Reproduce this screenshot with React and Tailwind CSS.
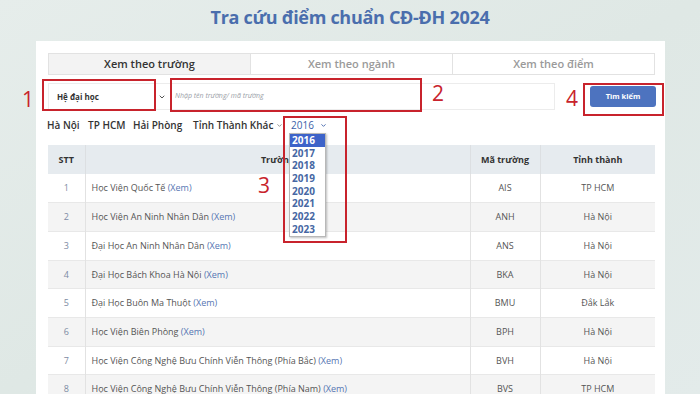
import { ChevronDown } from "lucide-react";

const rows = [
  { stt: 1, name: "Học Viện Quốc Tế", code: "AIS", city: "TP HCM" },
  { stt: 2, name: "Học Viện An Ninh Nhân Dân", code: "ANH", city: "Hà Nội" },
  { stt: 3, name: "Đại Học An Ninh Nhân Dân", code: "ANS", city: "Hà Nội" },
  { stt: 4, name: "Đại Học Bách Khoa Hà Nội", code: "BKA", city: "Hà Nội" },
  { stt: 5, name: "Đại Học Buôn Ma Thuột", code: "BMU", city: "Đắk Lắk" },
  { stt: 6, name: "Học Viện Biên Phòng", code: "BPH", city: "Hà Nội" },
  { stt: 7, name: "Học Viện Công Nghệ Bưu Chính Viễn Thông (Phía Bắc)", code: "BVH", city: "Hà Nội" },
  { stt: 8, name: "Học Viện Công Nghệ Bưu Chính Viễn Thông (Phía Nam)", code: "BVS", city: "TP HCM" },
];

const years = [2016, 2017, 2018, 2019, 2020, 2021, 2022, 2023];

export default function App() {
  return (
    <div
      className="relative w-[700px] h-[394px] overflow-hidden bg-gradient-to-br from-[#e6edeb] via-[#dfe8e5] to-[#e3ebea]"
      style={{ fontFamily: "'Open Sans', 'Noto Sans', sans-serif" }}
    >
      <h1 className="h-[41px] pt-[4px] text-center text-[18px] font-bold leading-[26px] tracking-[-0.3px] text-[#4a6ead]">
        Tra cứu điểm chuẩn CĐ-ĐH 2024
      </h1>

      <div className="ml-[36px] w-[629px] h-[353px] bg-white pt-[12px] pl-[12px] pr-[10px]">
        {/* tabs */}
        <div className="flex h-[22px] border border-[#e2e2e2] text-[11px] font-semibold">
          <div className="flex-1 flex items-center justify-center bg-[#f3f3f3] text-[#333]">Xem theo trường</div>
          <div className="flex-1 flex items-center justify-center border-l border-[#e2e2e2] text-[#9a9a9a]">Xem theo ngành</div>
          <div className="flex-1 flex items-center justify-center border-l border-[#e2e2e2] text-[#9a9a9a]">Xem theo điểm</div>
        </div>

        {/* search row */}
        <div className="mt-[8px] flex items-center h-[27px]">
          <div className="flex items-center h-full w-[122px] border-y border-l border-[#ececec] pl-[8px] pr-[4px]">
            <span className="text-[8px] font-bold text-[#333]">Hệ đại học</span>
            <ChevronDown className="ml-auto w-[8px] h-[8px] text-[#555]" strokeWidth={3} />
          </div>
          <div className="flex items-center h-full w-[385px] border border-[#ececec] pl-[4px]">
            <span className="text-[7px] italic text-[#9aa0a8]">Nhập tên trường/ mã trường</span>
          </div>
          <button className="ml-auto mr-[-1px] w-[66px] h-[21px] rounded-[3px] bg-[#4d73bf] text-[7.5px] font-bold text-white">
            Tìm kiếm
          </button>
        </div>

        {/* filter row */}
        <div className="mt-[8px] flex items-center h-[14px] text-[10px] font-semibold text-[#333]">
          <span className="ml-[-1px] w-[41px]">Hà Nội</span>
          <span className="w-[45px]">TP HCM</span>
          <span className="w-[60px]">Hải Phòng</span>
          <span className="w-[98px] flex items-center">
            Tỉnh Thành Khác
            <ChevronDown className="ml-[3px] w-[7px] h-[7px] text-[#888]" strokeWidth={3} />
          </span>
          <span className="flex items-center text-[#3c5fa8] font-normal">
            2016
            <ChevronDown className="ml-[6px] w-[7px] h-[7px] text-[#3c5fa8]" strokeWidth={3} />
          </span>
        </div>

        {/* table */}
        <table className="mt-[13px] w-full border-collapse text-[9px] table-fixed">
          <colgroup>
            <col className="w-[37px]" />
            <col className="w-[385px]" />
            <col className="w-[70px]" />
            <col />
          </colgroup>
          <thead>
            <tr className="h-[29px] bg-[#e6ebef] text-[#333]">
              <th className="border-r border-[#dcdfe2] font-bold">STT</th>
              <th className="border-r border-[#dcdfe2] font-bold">Trường</th>
              <th className="border-r border-[#dcdfe2] font-bold">Mã trường</th>
              <th className="font-bold">Tỉnh thành</th>
            </tr>
          </thead>
          <tbody>
            {rows.map((r, i) => (
              <tr key={r.stt} className={`h-[28.7px] border-b border-[#e8e8e8] text-[#555] ${i % 2 ? "bg-[#f4f4f4]" : "bg-white"}`}>
                <td className="text-center border-r border-[#e2e2e2] text-[#7d8ba3]">{r.stt}</td>
                <td className="pl-[6px] border-r border-[#e2e2e2]">
                  {r.name} <span className="text-[#5676b3]">(Xem)</span>
                </td>
                <td className="text-center border-r border-[#e2e2e2]">{r.code}</td>
                <td className="text-center">{r.city}</td>
              </tr>
            ))}
          </tbody>
        </table>
      </div>

      {/* year dropdown */}
      <div className="absolute left-[289px] top-[133px] w-[37px] bg-white border border-[#b8b8b8] shadow-[1px_1px_2px_rgba(0,0,0,0.25)]">
        {years.map((y, i) => (
          <div
            key={y}
            className={`h-[12.7px] pl-[2px] text-[10px] font-bold leading-[12.7px] ${i === 0 ? "bg-[#3d63c9] text-white" : "text-[#4667a3]"}`}
          >
            {y}
          </div>
        ))}
      </div>

      {/* annotation boxes */}
      <div className="absolute left-[42px] top-[79px] w-[114px] h-[32px] border-2 border-[#c8232c]" />
      <div className="absolute left-[170px] top-[78px] w-[252px] h-[34px] border-2 border-[#c8232c]" />
      <div className="absolute left-[283px] top-[116px] w-[64px] h-[127px] border-2 border-[#c8232c]" />
      <div className="absolute left-[583px] top-[83px] w-[81px] h-[33px] border-2 border-[#c8232c]" />

      <span className="absolute left-[22px] top-[87px] text-[21px] leading-[24px] text-[#c8232c]">1</span>
      <span className="absolute left-[432px] top-[81px] text-[21px] leading-[24px] text-[#c8232c]">2</span>
      <span className="absolute left-[258px] top-[173px] text-[21px] leading-[24px] text-[#c8232c]">3</span>
      <span className="absolute left-[566px] top-[86px] text-[21px] leading-[24px] text-[#c8232c]">4</span>
    </div>
  );
}
